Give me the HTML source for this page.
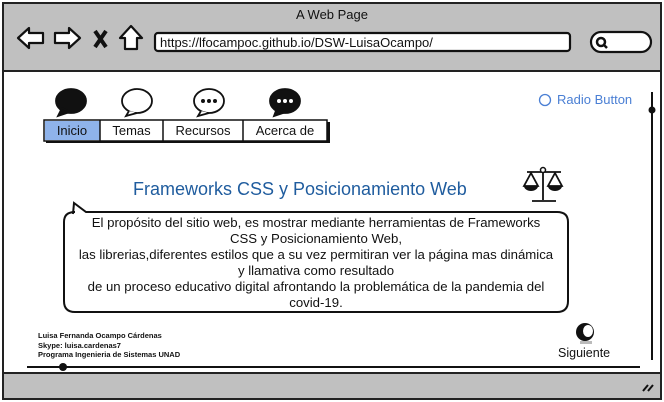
<!DOCTYPE html>
<html><head><meta charset="utf-8"><style>
*{margin:0;padding:0;box-sizing:border-box}
body{width:664px;height:402px;overflow:hidden;background:#fff;font-family:"Liberation Sans",sans-serif;position:relative}
.a{position:absolute}
.t{font-size:13px;color:#111;white-space:nowrap}
</style></head><body>
<div class="a" style="left:2px;top:2px;width:660px;height:398px;border:2px solid #222;background:#fff"></div>
<div class="a" style="left:4px;top:4px;width:656px;height:68px;background:#c0c0c0;border-bottom:2px solid #222"></div>
<div class="a" style="left:4px;top:372px;width:656px;height:26px;background:#c0c0c0;border-top:2px solid #222"></div>
<div class="a t" style="left:0;width:664px;text-align:center;top:7px;font-size:13px">A Web Page</div>
<svg class="a" style="left:0;top:0" width="664" height="402">
<g stroke="#111" stroke-width="2.2" fill="#fff" stroke-linejoin="round">
<path d="M18 38 L29 28 L29 33 L43 33 L43 43 L29 43 L29 48 Z"/>
<path d="M80 38 L69 28 L69 33 L55 33 L55 43 L69 43 L69 48 Z"/>
<path d="M131 26 L142 38 L137 38 L137 49 L125 49 L125 38 L120 38 Z"/>
<rect x="155" y="33" width="415" height="18" rx="3"/>
<rect x="591" y="32" width="60" height="20" rx="10"/>
</g>
<path d="M95 31 L106 47 M106 31 L95 47" stroke="#111" stroke-width="4"/>
<circle cx="601" cy="42" r="4" fill="none" stroke="#111" stroke-width="2.5"/><path d="M604 45 L607 48" stroke="#111" stroke-width="2.5"/>
<g stroke="#111" stroke-width="1.8">
<ellipse cx="71" cy="101" rx="15" ry="12" fill="#111"/><path d="M62 108 L58 116 L70 112 Z" fill="#111"/>
<ellipse cx="137" cy="101" rx="15" ry="12" fill="#fff"/><path d="M129 111 L126 116 L137 113" fill="#fff"/>
<ellipse cx="209" cy="101" rx="15" ry="12" fill="#fff"/><path d="M201 111 L198 116 L209 113" fill="#fff"/>
<ellipse cx="285" cy="101" rx="15" ry="12" fill="#111"/><path d="M277 108 L274 116 L286 112 Z" fill="#111"/>
</g>
<g fill="#111"><circle cx="203" cy="101" r="2"/><circle cx="209" cy="101" r="2"/><circle cx="215" cy="101" r="2"/></g>
<g fill="#fff"><circle cx="279" cy="101" r="2"/><circle cx="285" cy="101" r="2"/><circle cx="291" cy="101" r="2"/></g>
<rect x="46" y="122" width="284" height="21" fill="#111"/>
<rect x="44" y="120" width="283" height="21" fill="#fff" stroke="#111" stroke-width="1.5"/>
<rect x="45" y="121" width="55" height="19" fill="#8fb3ea"/>
<path d="M100 120 V141 M163 120 V141 M243 120 V141" stroke="#111" stroke-width="1.5"/>
<circle cx="545" cy="100" r="5.5" fill="none" stroke="#4a7fd4" stroke-width="1.3"/>
<path d="M652 92 V360" stroke="#111" stroke-width="2"/><circle cx="652" cy="110" r="3.5" fill="#111"/>
<g stroke="#111" stroke-width="1.8" fill="none">
<path d="M543 170 V200 M532 201 H556 M527 172 H561"/>
<path d="M531 173 L524 186 H538 Z M555 173 L548 186 H562 Z"/>
</g>
<circle cx="543" cy="170" r="2.5" fill="#fff" stroke="#111" stroke-width="1.5"/>
<path d="M524 186 A7 5 0 0 0 538 186 Z M548 186 A7 5 0 0 0 562 186 Z" fill="#111"/>
<path d="M75 212 Q64 212 64 222 V301 Q64 312 75 312 H557 Q568 312 568 301 V222 Q568 212 557 212 H86 L74 203 L73 214" fill="#fff" stroke="#111" stroke-width="2"/>
<path d="M27 367 H640" stroke="#111" stroke-width="2"/><circle cx="63" cy="367" r="4" fill="#111"/>
<path d="M643 391 L648 385 M648 391 L653 385" stroke="#111" stroke-width="2"/>
<ellipse cx="585" cy="332" rx="9" ry="9" fill="#111"/><ellipse cx="588" cy="331" rx="5" ry="6" fill="#fff"/>
<rect x="580" y="341" width="12" height="3" fill="#bbb"/>
</svg>
<div class="a t" style="left:160px;top:35px;font-size:13px">https://lfocampoc.github.io/DSW-LuisaOcampo/</div>
<div class="a t" style="left:44px;width:56px;text-align:center;top:123px">Inicio</div>
<div class="a t" style="left:100px;width:63px;text-align:center;top:123px">Temas</div>
<div class="a t" style="left:163px;width:80px;text-align:center;top:123px">Recursos</div>
<div class="a t" style="left:243px;width:84px;text-align:center;top:123px">Acerca de</div>
<div class="a t" style="left:557px;top:92px;color:#4a7fd4">Radio Button</div>
<div class="a t" style="left:133px;top:179px;font-size:18px;color:#1f5c9e">Frameworks CSS y Posicionamiento Web</div>
<div class="a" style="left:56px;width:520px;top:215px;text-align:center;font-size:13.2px;line-height:16px;color:#111">El propósito del sitio web, es mostrar mediante herramientas de Frameworks<br>CSS y Posicionamiento Web,<br>las librerias,diferentes estilos que a su vez permitiran ver la página mas dinámica<br>y llamativa como resultado<br>de un proceso educativo digital afrontando la problemática de la pandemia del<br>covid-19.</div>
<div class="a" style="left:38px;top:331px;font-size:7.5px;line-height:9.5px;font-weight:bold;color:#111">Luisa Fernanda Ocampo Cárdenas<br>Skype: luisa.cardenas7<br>Programa Ingenieria de Sistemas UNAD</div>
<div class="a t" style="left:558px;top:346px;font-size:12.5px">Siguiente</div>
</body></html>
